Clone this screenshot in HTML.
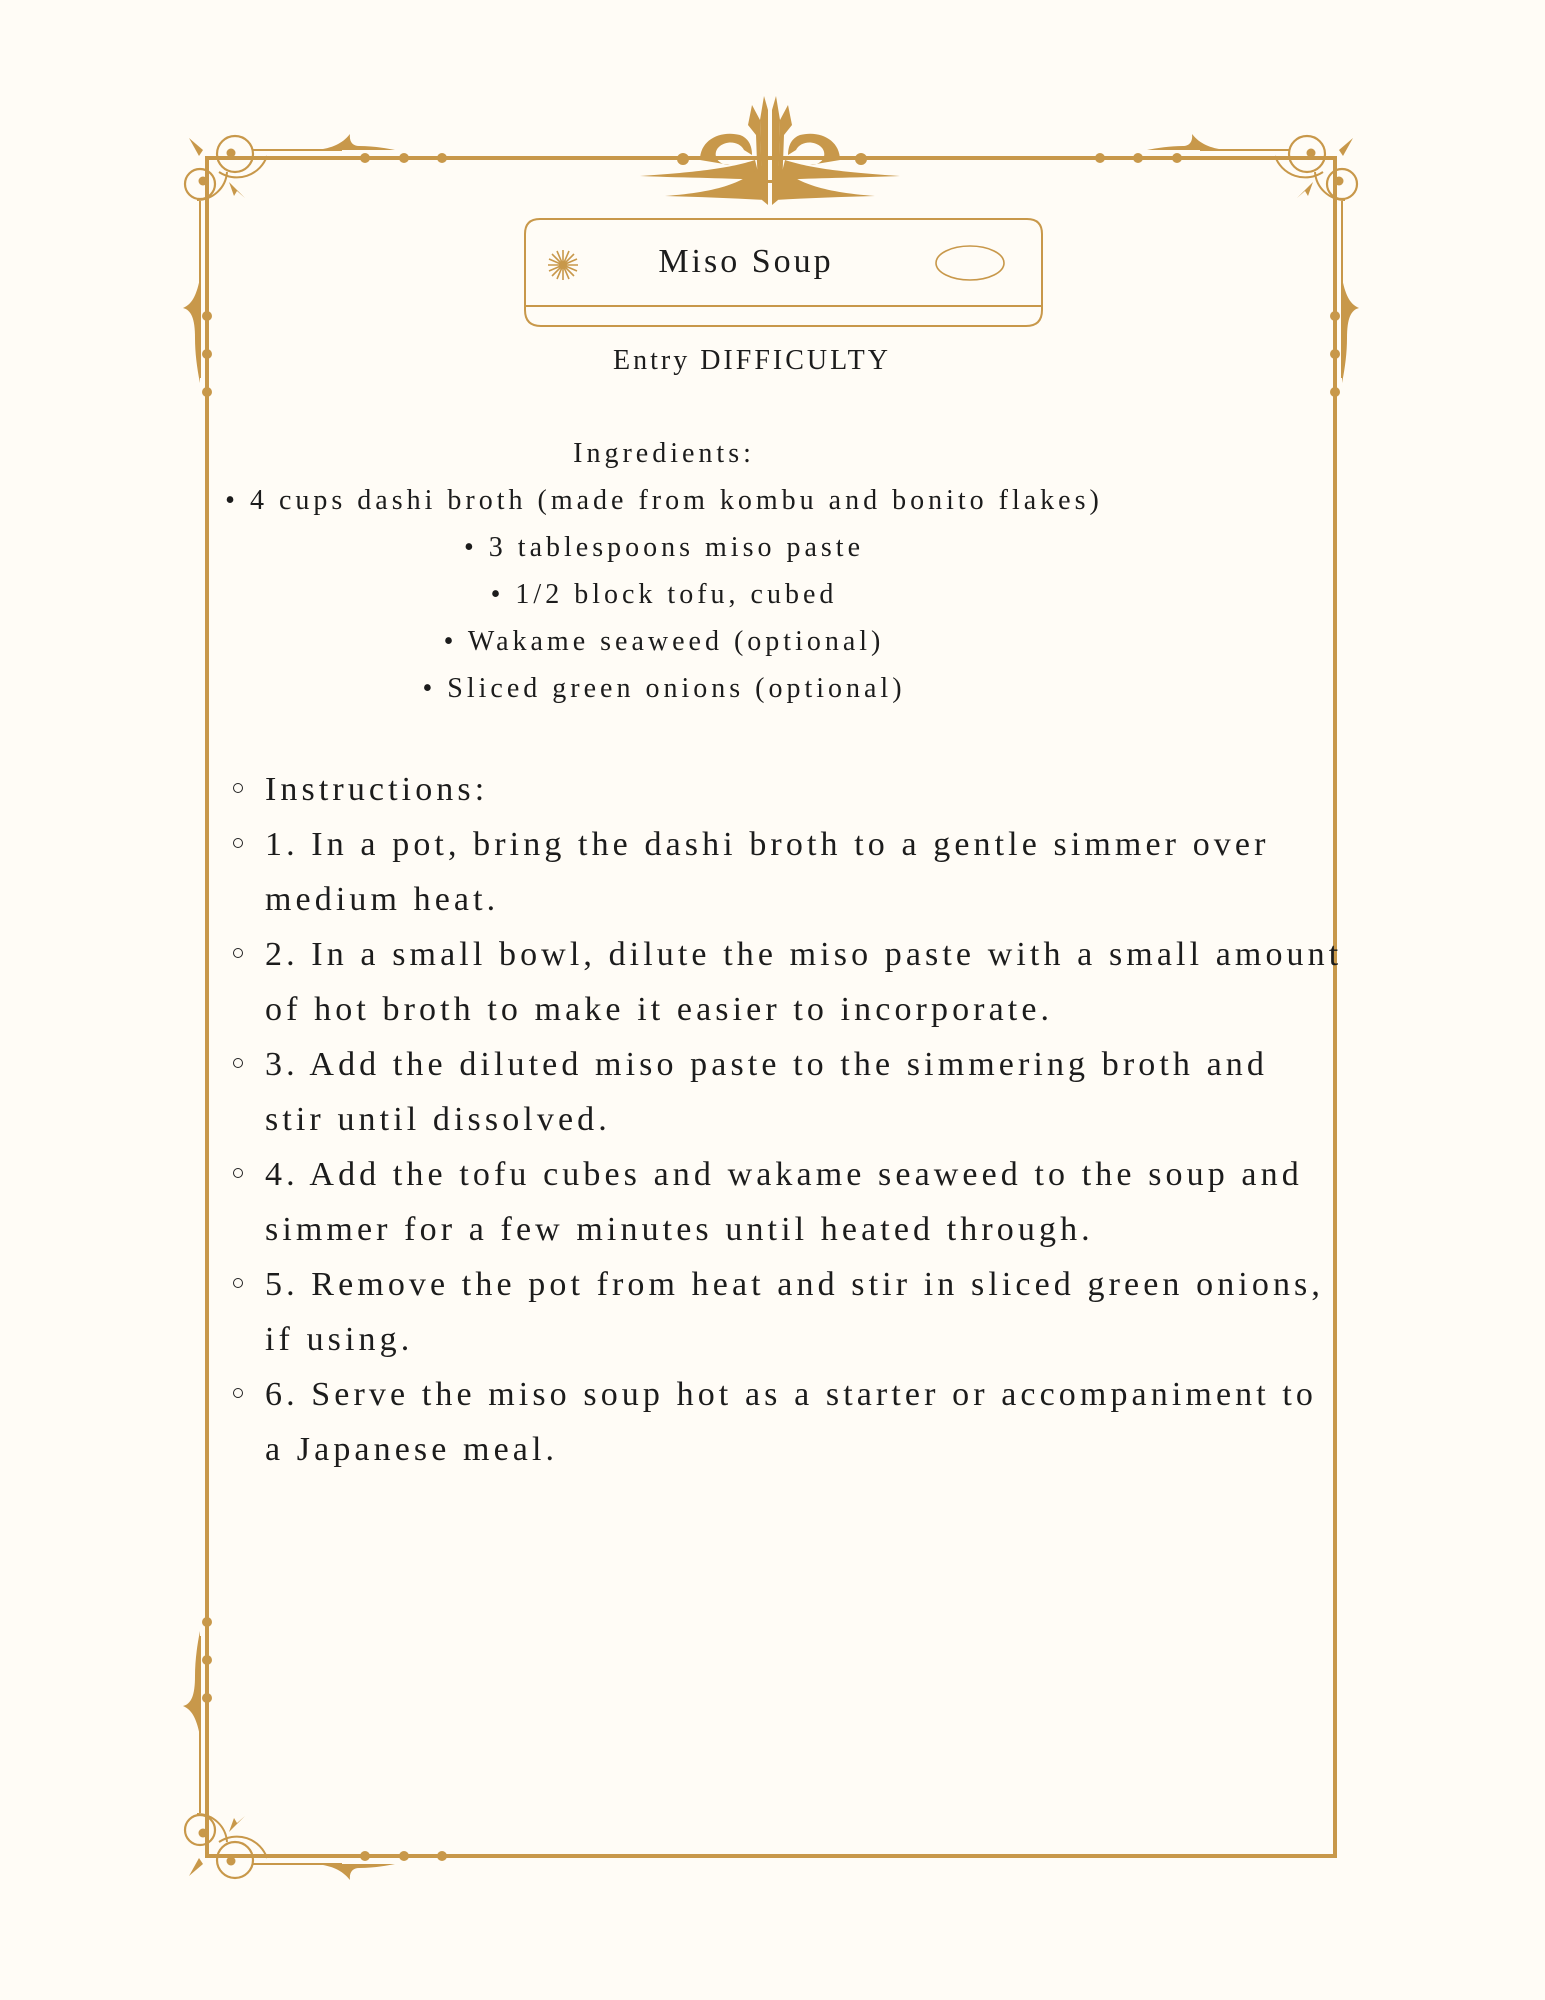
<!DOCTYPE html>
<html><head><meta charset="utf-8"><style>
html,body{margin:0;padding:0;background:#FFFCF6;}
body{width:1545px;height:2000px;position:relative;overflow:hidden;font-family:"Liberation Serif",serif;color:#1c1c1c;}
svg{position:absolute;left:0;top:0;}
.t{position:absolute;white-space:nowrap;}
.ing{position:absolute;left:0;width:1328px;text-align:center;font-size:28px;letter-spacing:4px;line-height:30px;white-space:nowrap;}
.ins{position:absolute;left:265px;font-size:34px;letter-spacing:4.1px;line-height:34px;white-space:nowrap;}
.bul{position:absolute;left:233px;width:8px;height:8px;border:1.6px solid #222;border-radius:50%;}
</style></head><body>
<svg width="1545" height="2000" viewBox="0 0 1545 2000">
<defs>
<g id="corner" fill="#C8984A" stroke="#C8984A">
  <line x1="-2" y1="0" x2="260" y2="0" stroke-width="4"/>
  <line x1="0" y1="-2" x2="0" y2="260" stroke-width="4"/>
  <line x1="45" y1="-8" x2="135" y2="-8" stroke-width="2" />
  <line x1="-7" y1="43" x2="-7" y2="220" stroke-width="2"/>
  <circle cx="28" cy="-4" r="18" fill="none" stroke-width="2.2"/>
  <circle cx="-7" cy="26" r="15" fill="none" stroke-width="2.2"/>
  <path d="M12 14 A32 32 0 0 0 60 -2" fill="none" stroke-width="2"/>
  <path d="M-10 42 A30 30 0 0 0 20 14" fill="none" stroke-width="2"/>
  <circle cx="24" cy="-5" r="4.5" stroke="none"/>
  <circle cx="-4" cy="23" r="4.5" stroke="none"/>
  <path d="M-18 -20 L-4 -8 L-8 -2 Z" stroke="none"/>
  <path d="M22 24 L38 40 L30 33 L27 38 Z" stroke="none"/>
  <path d="M110 -8 C125 -10 135 -14 143 -24 C142 -16 146 -12 152 -12 C165 -12 178 -10 188 -8 Z" stroke="none"/>
  <path d="M-7 120 C-10 135 -14 146 -24 150 C-16 152 -12 160 -12 180 C-12 195 -10 210 -7 225 Z" stroke="none"/>
  <circle cx="158" cy="0" r="5" stroke="none"/><circle cx="197" cy="0" r="5" stroke="none"/><circle cx="235" cy="0" r="5" stroke="none"/>
  <circle cx="0" cy="158" r="5" stroke="none"/><circle cx="0" cy="196" r="5" stroke="none"/><circle cx="0" cy="234" r="5" stroke="none"/>
</g>
</defs>
<rect x="207" y="158" width="1128" height="1698" fill="none" stroke="#C8984A" stroke-width="4"/>
<use href="#corner" transform="translate(207,158)"/>
<use href="#corner" transform="translate(1335,158) scale(-1,1)"/>
<use href="#corner" transform="translate(207,1856) scale(1,-1)"/>
<g fill="#C8984A">
  <circle cx="683" cy="159" r="6"/><circle cx="861" cy="159" r="6"/>
  <path d="M640 176 C700 172 730 168 755 160 L760 180 C730 178 690 178 640 176 Z"/>
  <path d="M900 176 C840 172 810 168 785 160 L780 180 C810 178 850 178 900 176 Z"/>
  <path d="M665 196 C720 192 745 182 762 165 L765 200 C730 198 700 197 665 196 Z"/>
  <path d="M875 196 C820 192 795 182 778 165 L775 200 C810 198 840 197 875 196 Z"/>
  <path d="M700 160 C700 140 720 130 740 135 C748 138 752 145 752 155 L744 150 C740 142 728 140 720 146 C712 152 715 165 730 165 Z"/>
  <path d="M840 160 C840 140 820 130 800 135 C792 138 788 145 788 155 L796 150 C800 142 812 140 820 146 C828 152 825 165 810 165 Z"/>
  <path d="M764 96 L760 120 L762 200 L768 205 L768 110 Z"/>
  <path d="M776 96 L780 120 L778 200 L772 205 L772 110 Z"/>
  <path d="M752 105 L748 125 L756 135 L758 190 L762 190 L760 120 Z"/>
  <path d="M788 105 L792 125 L784 135 L782 190 L778 190 L780 120 Z"/>
  <rect x="756" y="180" width="28" height="3"/>
</g>
<g fill="none" stroke="#C8984A" stroke-width="2">
  <path d="M540 219 H1027 Q1042 219 1042 234 V306 H525 V234 Q525 219 540 219 Z"/>
  <path d="M525 306 V310 Q525 326 541 326 H1026 Q1042 326 1042 310 V306"/>
  <ellipse cx="970" cy="263" rx="34" ry="17" stroke-width="1.6"/>
  <g stroke-width="1.6" transform="translate(563,265)">
    <line x1="-15" y1="0" x2="15" y2="0"/><line x1="0" y1="-15" x2="0" y2="15"/>
    <line x1="-11" y1="-11" x2="11" y2="11"/><line x1="-11" y1="11" x2="11" y2="-11"/>
    <line x1="-14" y1="-6" x2="14" y2="6"/><line x1="-14" y1="6" x2="14" y2="-6"/>
    <line x1="-6" y1="-14" x2="6" y2="14"/><line x1="6" y1="-14" x2="-6" y2="14"/>
  </g>
  <circle cx="563" cy="265" r="4" fill="#C8984A" stroke="none"/>
</g>
</svg>
<div class="t" style="left:0;width:1492px;text-align:center;top:243px;font-size:34px;letter-spacing:3px;">Miso Soup</div>
<div class="t" style="left:0;width:1504px;text-align:center;top:345px;font-size:28px;letter-spacing:3px;">Entry DIFFICULTY</div>
<div class="ing" style="top:439px;">Ingredients:</div>
<div class="ing" style="top:486px;">• 4 cups dashi broth (made from kombu and bonito flakes)</div>
<div class="ing" style="top:533px;">• 3 tablespoons miso paste</div>
<div class="ing" style="top:580px;">• 1/2 block tofu, cubed</div>
<div class="ing" style="top:627px;">• Wakame seaweed (optional)</div>
<div class="ing" style="top:674px;">• Sliced green onions (optional)</div>

<div class="bul" style="top:783px"></div><div class="ins" style="top:773px">Instructions:</div>
<div class="bul" style="top:838px"></div><div class="ins" style="top:828px">1. In a pot, bring the dashi broth to a gentle simmer over</div>
<div class="ins" style="top:883px">medium heat.</div>
<div class="bul" style="top:948px"></div><div class="ins" style="top:938px">2. In a small bowl, dilute the miso paste with a small amount</div>
<div class="ins" style="top:993px">of hot broth to make it easier to incorporate.</div>
<div class="bul" style="top:1058px"></div><div class="ins" style="top:1048px">3. Add the diluted miso paste to the simmering broth and</div>
<div class="ins" style="top:1103px">stir until dissolved.</div>
<div class="bul" style="top:1168px"></div><div class="ins" style="top:1158px">4. Add the tofu cubes and wakame seaweed to the soup and</div>
<div class="ins" style="top:1213px">simmer for a few minutes until heated through.</div>
<div class="bul" style="top:1278px"></div><div class="ins" style="top:1268px">5. Remove the pot from heat and stir in sliced green onions,</div>
<div class="ins" style="top:1323px">if using.</div>
<div class="bul" style="top:1388px"></div><div class="ins" style="top:1378px">6. Serve the miso soup hot as a starter or accompaniment to</div>
<div class="ins" style="top:1433px">a Japanese meal.</div>
</body></html>
